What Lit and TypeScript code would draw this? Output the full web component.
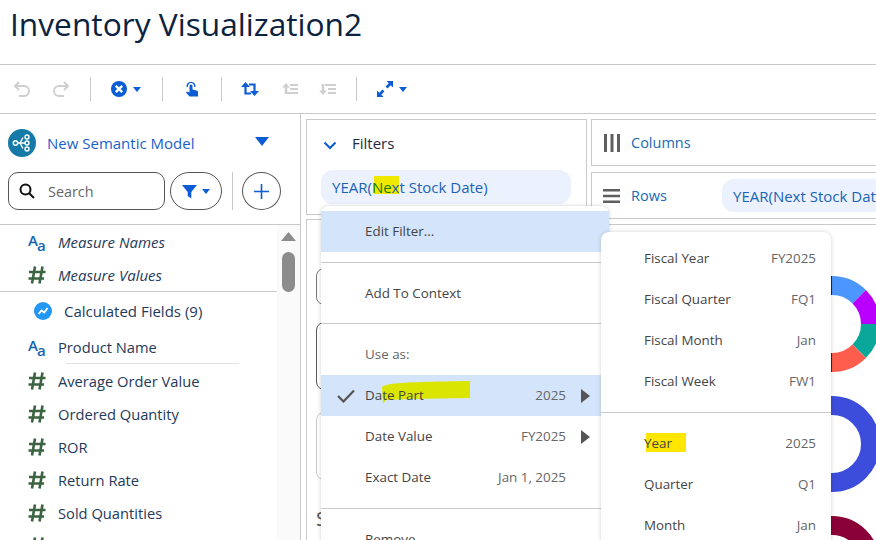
import { LitElement, html, css, svg, nothing } from 'lit';
import { customElement } from 'lit/decorators.js';

type Field = { name: string; kind: 'text' | 'num'; italic?: boolean };

const caret = html`<svg class="caret" viewBox="0 0 8 5"><path d="M0 0h8L4 5z" /></svg>`;

const textIcon = html`<span class="ficon aa"><span>A</span><span class="aa-low">a</span></span>`;

const numIcon = html`<svg class="ficon" viewBox="0 0 18 18" fill="none" stroke="#3c6440" stroke-width="2.6">
  <path d="M7 .5 4 17.5M14.5 .5 11.5 17.5M1 6h16.5M.5 12.5H16" />
</svg>`;

const menuArrow = html`<svg class="arrow" viewBox="0 0 9 14"><path d="M0 0l9 7-9 7z" /></svg>`;

// arc segment of a donut, angles in degrees clockwise from 12 o'clock
function arc(cx: number, cy: number, r: number, from: number, to: number, color: string) {
  const pt = (a: number) => {
    const rad = ((a - 90) * Math.PI) / 180;
    return `${(cx + r * Math.cos(rad)).toFixed(2)} ${(cy + r * Math.sin(rad)).toFixed(2)}`;
  };
  const large = to - from > 180 ? 1 : 0;
  return svg`<path d="M${pt(from)}A${r} ${r} 0 ${large} 1 ${pt(to)}" stroke=${color} stroke-width="19" fill="none" />`;
}

@customElement('app-root')
export class AppRoot extends LitElement {
  static styles = css`
    :host {
      display: block;
      position: relative;
      width: 876px;
      height: 540px;
      overflow: hidden;
      background: #fff;
      font-family: 'Open Sans', 'Liberation Sans', sans-serif;
      font-size: 14.7px;
      color: #1f3a5a;
    }
    .title {
      box-sizing: border-box;
      border-bottom: 1px solid #c9c9c9;
      height: 65px;
      padding: 3px 0 0 10px;
      font-size: 31.7px;
      line-height: 42px;
      color: #0c2340;
    }
    .toolbar {
      box-sizing: border-box;
      height: 49px;
      border-bottom: 1px solid #c9c9c9;
      display: flex;
      align-items: center;
      gap: 19px;
      padding: 0 0 0 12px;
    }
    .tool {
      width: 20px;
      height: 20px;
      flex: none;
    }
    .tool.narrow {
      width: 18px;
    }
    .tool-group {
      display: flex;
      align-items: center;
      gap: 5px;
      width: 33px;
      flex: none;
    }
    .caret {
      width: 8px;
      height: 5px;
      fill: #0b5cd5;
      flex: none;
    }
    .sep {
      width: 1px;
      height: 24px;
      background: #c9c9c9;
      flex: none;
    }
    .body {
      display: flex;
      height: 427px;
    }
    .side {
      width: 301px;
      box-sizing: border-box;
      border-right: 1px solid #c9c9c9;
      flex: none;
      display: flex;
      flex-direction: column;
    }
    .model {
      display: flex;
      align-items: center;
      height: 30px;
      margin-top: 14px;
      padding: 0 31px 0 8px;
    }
    .model-icon {
      width: 28px;
      height: 28px;
      flex: none;
    }
    .model-name {
      margin-left: 11px;
      flex: 1;
      color: #1a5fd0;
      font-size: 15px;
    }
    .model-caret {
      width: 14px;
      height: 9px;
      fill: #0b5cd5;
      margin-top: -3px;
    }
    .search-row {
      display: flex;
      align-items: center;
      padding-left: 8px;
      margin-top: 14px;
      height: 38px;
    }
    .search {
      width: 157px;
      height: 38px;
      box-sizing: border-box;
      border: 1px solid #555;
      border-radius: 10px;
      display: flex;
      align-items: center;
      padding-left: 10px;
      color: #666;
      font-size: 14.4px;
    }
    .search svg {
      width: 16px;
      height: 16px;
      margin-right: 13px;
    }
    .pill {
      width: 52px;
      height: 38px;
      margin-left: 5px;
      box-sizing: border-box;
      border: 1px solid #555;
      border-radius: 19px;
      display: flex;
      align-items: center;
      justify-content: center;
      gap: 5px;
    }
    .pill svg.funnel {
      width: 15px;
      height: 15px;
      fill: #0b5cd5;
    }
    .side-sep {
      width: 1px;
      height: 38px;
      background: #c9c9c9;
      margin: 0 9px 0 10px;
    }
    .plus {
      width: 39px;
      height: 38px;
      box-sizing: border-box;
      border: 1px solid #555;
      border-radius: 50%;
      display: flex;
      align-items: center;
      justify-content: center;
    }
    .plus svg {
      width: 15px;
      height: 15px;
    }
    .list-wrap {
      margin-top: 14px;
      border-top: 1px solid #c9c9c9;
      flex: 1;
      display: flex;
      min-height: 0;
    }
    .list {
      width: 277px;
      flex: none;
      overflow: hidden;
    }
    .group {
      border-bottom: 1px solid #c9c9c9;
    }
    .row {
      height: 33px;
      display: flex;
      align-items: center;
      padding-left: 28px;
      gap: 12px;
    }
    .row.italic {
      font-style: italic;
      font-size: 15px;
    }
    .ficon {
      width: 18px;
      height: 18px;
      flex: none;
    }
    .aa {
      display: flex;
      align-items: flex-start;
      font-size: 15px;
      font-weight: 600;
      font-style: normal;
      line-height: 14px;
      color: #1565b0;
    }
    .aa-low {
      margin: 5px 0 0 -1px;
    }
    .calc {
      height: 38px;
      display: flex;
      align-items: center;
      padding-left: 34px;
      gap: 12px;
      font-size: 15px;
    }
    .calc svg {
      width: 18px;
      height: 18px;
      flex: none;
    }
    .rule {
      height: 1px;
      width: 173px;
      margin-left: 66px;
      background: #e3e3e3;
    }
    .track {
      flex: 1;
      background: #fafafa;
      display: flex;
      flex-direction: column;
      align-items: center;
      padding-top: 7px;
      gap: 11px;
    }
    .track-up {
      width: 15px;
      height: 9px;
      fill: #8c8c8c;
    }
    .thumb {
      width: 13px;
      height: 40px;
      border-radius: 7px;
      background: #8c8c8c;
    }
    .main {
      flex: 1;
      min-width: 0;
      display: grid;
      grid-template-columns: 281px 1fr;
      column-gap: 4px;
      padding: 5px 0 0 5px;
    }
    .col {
      display: flex;
      flex-direction: column;
      min-width: 0;
    }
    .card {
      border: 1px solid #c9c9c9;
      box-sizing: border-box;
    }
    .filters {
      height: 96px;
      padding: 13px 15px 0 14px;
    }
    .filters-head {
      display: flex;
      align-items: center;
      color: #1c2b40;
      height: 20px;
      font-size: 15px;
    }
    .chev {
      width: 14px;
      height: 9px;
      margin: 5px 15px 0 2px;
    }
    .chip {
      position: relative;
      background: #ebf2fd;
      color: #1a62b5;
      border-radius: 12px;
      height: 34px;
      display: flex;
      align-items: center;
      padding: 0 11px;
      white-space: nowrap;
      overflow: hidden;
      font-size: 15px;
    }
    .chip-text {
      position: relative;
    }
    .filters .chip {
      margin-top: 17px;
    }
    .next {
      color: #137a12;
    }
    .mark {
      position: absolute;
    }
    .mark-next {
      left: 53px;
      top: 6px;
      width: 25px;
      height: 18px;
      background: #f0e800;
    }
    .marks {
      flex: 1;
      margin-top: 4px;
      padding: 48px 0 0 9px;
      border-bottom: 0;
      overflow: hidden;
    }
    .box {
      width: 240px;
      border: 1px solid #c9c9c9;
      border-radius: 8px;
      box-sizing: border-box;
      margin-bottom: 17px;
    }
    .box-a {
      height: 37px;
      border-color: #777;
    }
    .box-b {
      height: 68px;
      border-color: #555;
      margin-bottom: 22px;
    }
    .box-c {
      height: 68px;
    }
    .marks-label {
      margin-top: 27px;
      color: #555;
      font-size: 20px;
      line-height: 24px;
    }
    .shelf {
      display: flex;
      align-items: center;
      color: #1a6ab5;
      overflow: hidden;
      white-space: nowrap;
      border-right: 0;
      font-size: 14.5px;
    }
    .shelf-columns {
      height: 47px;
      padding-left: 12px;
      gap: 11px;
    }
    .shelf-rows {
      height: 47px;
      margin-top: 6px;
      padding-left: 11px;
    }
    .shelf svg {
      flex: none;
    }
    .shelf-rows-name {
      margin-left: 11px;
      width: 91px;
      flex: none;
    }
    .shelf .chip {
      flex: none;
      width: 200px;
      height: 33px;
      border-radius: 12px 0 0 12px;
    }
    .canvas {
      position: relative;
      flex: 1;
      margin-top: 5px;
      border-top: 1px solid #c9c9c9;
    }
    .donuts {
      position: absolute;
      left: 0;
      top: 0;
      width: 285px;
      height: 315px;
    }
    .menu {
      position: absolute;
      left: 321px;
      top: 206px;
      width: 288px;
      height: 360px;
      background: #fff;
      border-radius: 8px;
      box-shadow: 0 0 4px rgba(0, 0, 0, 0.18);
      padding-top: 5px;
      box-sizing: border-box;
      color: #444;
      font-size: 13.4px;
    }
    .submenu {
      left: 601px;
      top: 232px;
      width: 230px;
      padding-top: 6px;
    }
    .item {
      position: relative;
      height: 41px;
      box-sizing: border-box;
      display: flex;
      align-items: center;
      padding: 0 43px 1px 44px;
    }
    .submenu .item {
      padding: 0 15px 1px 43px;
    }
    .item.active {
      background: #d3e4fb;
    }
    .item.hint {
      color: #666;
    }
    .item-label {
      position: relative;
      flex: 1;
    }
    .item-value {
      position: relative;
      color: #666;
    }
    .check {
      position: absolute;
      left: 16px;
      top: 14px;
      width: 18px;
      height: 14px;
    }
    .arrow {
      position: absolute;
      left: 260px;
      top: 14px;
      width: 9px;
      height: 14px;
      fill: #555;
    }
    .divider {
      height: 1px;
      background: #c9c9c9;
      margin: 10px 0;
    }
    .divider.tight {
      margin-top: 9px;
    }
    .mark-part {
      left: 61px;
      top: 6px;
      width: 88px;
      height: 23px;
    }
    .mark-year {
      left: 45px;
      top: 10px;
      width: 40px;
      height: 19px;
      background: #ffe600;
    }
  `;

  private fields: Field[] = [
    { name: 'Average Order Value', kind: 'num' },
    { name: 'Ordered Quantity', kind: 'num' },
    { name: 'ROR', kind: 'num' },
    { name: 'Return Rate', kind: 'num' },
    { name: 'Sold Quantities', kind: 'num' },
    { name: '', kind: 'num' },
  ];

  private renderToolbar() {
    const off = '#cfcfcf';
    const on = '#0b5cd5';
    return html`<div class="toolbar">
      <svg class="tool" viewBox="0 0 20 20" fill="none" stroke=${off} stroke-width="2">
        <path d="M7 3 3 7l4 4M3 7h9a5 5 0 0 1 0 10H7" />
      </svg>
      <svg class="tool" viewBox="0 0 20 20" fill="none" stroke=${off} stroke-width="2">
        <path d="M13 3l4 4-4 4M17 7H8a5 5 0 0 0 0 10h5" />
      </svg>
      <div class="sep"></div>
      <div class="tool-group">
        <svg class="tool narrow" viewBox="0 0 18 18">
          <circle cx="9" cy="9" r="8" fill=${on} />
          <path d="M5.8 5.8l6.4 6.4M12.2 5.8l-6.4 6.4" stroke="#fff" stroke-width="2.4" />
        </svg>
        ${caret}
      </div>
      <div class="sep"></div>
      <svg class="tool" viewBox="-4 -2.5 20 20" fill=${on}>
        <path d="M3.5 4.5a1.5 1.5 0 0 1 3 0V8l4 1c1 .2 1.5.8 1.5 2v4H3.5L0 11l1-1 2.5 1z" />
        <path d="M1.3 5.5a3.8 3.8 0 1 1 7.4 0" fill="none" stroke=${on} stroke-width="1.4" />
      </svg>
      <div class="sep"></div>
      <svg class="tool narrow" viewBox="0 -3 18 20" fill=${on}>
        <path d="M0 5 4.5 0 9 5zM9 9l4.5 5L18 9z" />
        <path d="M4.5 4v7.5H10M13.5 10V2.5H8" fill="none" stroke=${on} stroke-width="2.2" />
      </svg>
      <svg class="tool" viewBox="-2 0 20 20" fill=${off}>
        <path d="M6 4l4 4.5H7.3V15H4.7V8.5H2zM10 5h8v2h-8zM10 9h8v2h-8zM7 13h11v2H7z" />
      </svg>
      <svg class="tool" viewBox="0 0 20 20" fill=${off}>
        <path d="M6 16l4-4.5H7.3V5H4.7v6.5H2zM8 5h11v2H8zM11 9h8v2h-8zM11 13h8v2h-8z" />
      </svg>
      <div class="sep"></div>
      <div class="tool-group">
        <svg class="tool narrow" viewBox="0 0 18 18" fill=${on}>
          <path d="M10.5 1H17v6.5l-2.3-2.3-3.2 3.2-1.9-1.9 3.2-3.2zM7.5 17H1v-6.5l2.3 2.3 3.2-3.2 1.9 1.9-3.2 3.2z" />
        </svg>
        ${caret}
      </div>
    </div>`;
  }

  private renderSide() {
    return html`<aside class="side">
      <div class="model">
        <svg class="model-icon" viewBox="0 0 28 28">
          <circle cx="14" cy="14" r="14" fill="#157aa8" />
          <g fill="none" stroke="#fff" stroke-width="1.4">
            <path d="M9.5 14h8M12 14l3-5.5M12 14l3 5.5" />
            <circle cx="7.5" cy="14" r="2.2" />
            <circle cx="19" cy="8" r="2" />
            <circle cx="19" cy="14" r="2" />
            <circle cx="19" cy="20" r="2" />
          </g>
        </svg>
        <span class="model-name">New Semantic Model</span>
        <svg class="model-caret" viewBox="0 0 14 9"><path d="M0 0h14L7 9z" /></svg>
      </div>
      <div class="search-row">
        <div class="search">
          <svg viewBox="0 0 16 16" fill="none" stroke="#111" stroke-width="2">
            <circle cx="6.5" cy="6.5" r="5" /><path d="M10.2 10.2 15 15" />
          </svg>
          Search
        </div>
        <div class="pill">
          <svg class="funnel" viewBox="0 0 15 15"><path d="M0 1h15L9.3 8v6.5L5.7 12V8z" /></svg>
          ${caret}
        </div>
        <div class="side-sep"></div>
        <div class="plus">
          <svg viewBox="0 0 15 15" stroke="#0b5cd5" stroke-width="1.6"><path d="M7.5 0v15M0 7.5h15" /></svg>
        </div>
      </div>
      <div class="list-wrap">
        <div class="list">
          <div class="group">
            <div class="row italic">${textIcon}<span>Measure Names</span></div>
            <div class="row italic">${numIcon}<span>Measure Values</span></div>
          </div>
          <div class="calc">
            <svg viewBox="0 0 18 18">
              <circle cx="9" cy="9" r="9" fill="#2196f3" />
              <path d="M4.5 12 7.5 8.5l2.8 2L13.5 6" fill="none" stroke="#fff" stroke-width="1.8" />
            </svg>
            <span>Calculated Fields (9)</span>
          </div>
          <div class="row">${textIcon}<span>Product Name</span></div>
          <div class="rule"></div>
          ${this.fields.map(
            (f) => html`<div class="row">${numIcon}${f.name ? html`<span>${f.name}</span>` : nothing}</div>`
          )}
        </div>
        <div class="track">
          <svg class="track-up" viewBox="0 0 15 9"><path d="M7.5 0 15 9H0z" /></svg>
          <div class="thumb"></div>
        </div>
      </div>
    </aside>`;
  }

  private renderMain() {
    return html`<main class="main">
      <div class="col">
        <div class="card filters">
          <div class="filters-head">
            <svg class="chev" viewBox="0 0 14 9" fill="none" stroke="#0b5cd5" stroke-width="2">
              <path d="M1.5 1.5 7 7l5.5-5.5" />
            </svg>
            <span>Filters</span>
          </div>
          <div class="chip">
            <span class="mark mark-next"></span>
            <span class="chip-text">YEAR(<span class="next">Ne</span>xt Stock Date)</span>
          </div>
        </div>
        <div class="card marks">
          <div class="box box-a"></div>
          <div class="box box-b"></div>
          <div class="box box-c"></div>
          <div class="marks-label">S</div>
        </div>
      </div>
      <div class="col">
        <div class="card shelf shelf-columns">
          <svg width="16" height="18" viewBox="0 0 16 18" fill="#5f5f5f">
            <path d="M0 0h3v18H0zM6.5 0h3v18h-3zM13 0h3v18h-3z" />
          </svg>
          <span>Columns</span>
        </div>
        <div class="card shelf shelf-rows">
          <svg width="17" height="14" viewBox="0 0 17 14" fill="#5f5f5f">
            <path d="M0 0h17v2.4H0zM0 5.8h17v2.4H0zM0 11.6h17V14H0z" />
          </svg>
          <span class="shelf-rows-name">Rows</span>
          <div class="chip">YEAR(Next Stock Date)</div>
        </div>
        <div class="canvas">
          <svg class="donuts" viewBox="0 0 285 315">
            ${arc(241, 99, 38.5, 0, 45, '#4c97ff')} ${arc(241, 99, 38.5, 45, 90, '#b900ff')}
            ${arc(241, 99, 38.5, 90, 135, '#09a89a')} ${arc(241, 99, 38.5, 135, 180, '#ff5d4d')}
            ${arc(241, 99, 38.5, 180, 225, '#003f3f')} ${arc(241, 99, 38.5, 315, 360, '#0b2a6b')}
            ${arc(241, 219, 38.5, 0, 180, '#3d4ddb')} ${arc(241, 219, 38.5, 180, 360, '#3d4ddb')}
            ${arc(241, 339, 38.5, 0, 180, '#8a0038')} ${arc(241, 339, 38.5, 180, 360, '#8a0038')}
          </svg>
        </div>
      </div>
    </main>`;
  }

  private renderMenu() {
    return html`<div class="menu">
      <div class="item active"><span class="item-label">Edit Filter...</span></div>
      <div class="divider"></div>
      <div class="item"><span class="item-label">Add To Context</span></div>
      <div class="divider tight"></div>
      <div class="item hint"><span class="item-label">Use as:</span></div>
      <div class="item active">
        <svg class="check" viewBox="0 0 18 14" fill="none" stroke="#555" stroke-width="2.2">
          <path d="M1 7l5.5 5.5L17 1.5" />
        </svg>
        <svg class="mark mark-part" viewBox="0 0 88 23" preserveAspectRatio="none">
          <path d="M0 6C6 2 20 1 88 0V17L28 18 4 19 1 23z" fill="#dbe600" />
        </svg>
        <span class="item-label">Date Part</span><span class="item-value">2025</span>${menuArrow}
      </div>
      <div class="item"><span class="item-label">Date Value</span><span class="item-value">FY2025</span>${menuArrow}</div>
      <div class="item"><span class="item-label">Exact Date</span><span class="item-value">Jan 1, 2025</span></div>
      <div class="divider"></div>
      <div class="item"><span class="item-label">Remove</span></div>
    </div>
    <div class="menu submenu">
      ${[
        ['Fiscal Year', 'FY2025'],
        ['Fiscal Quarter', 'FQ1'],
        ['Fiscal Month', 'Jan'],
        ['Fiscal Week', 'FW1'],
      ].map(
        ([a, b]) => html`<div class="item"><span class="item-label">${a}</span><span class="item-value">${b}</span></div>`
      )}
      <div class="divider"></div>
      <div class="item">
        <span class="mark mark-year"></span>
        <span class="item-label">Year</span><span class="item-value">2025</span>
      </div>
      <div class="item"><span class="item-label">Quarter</span><span class="item-value">Q1</span></div>
      <div class="item"><span class="item-label">Month</span><span class="item-value">Jan</span></div>
    </div>`;
  }

  render() {
    return html`
      <div class="title">Inventory Visualization2</div>
      ${this.renderToolbar()}
      <div class="body">${this.renderSide()}${this.renderMain()}</div>
      ${this.renderMenu()}
    `;
  }
}
